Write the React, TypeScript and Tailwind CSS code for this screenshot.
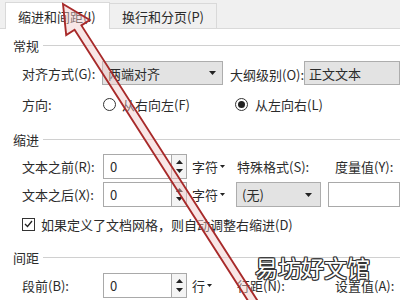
import React from "react";

function Tri({ down = true, w = 7, h = 4 }: { down?: boolean; w?: number; h?: number }) {
  return (
    <svg width={w} height={h} viewBox={`0 0 ${w} ${h}`} className="shrink-0">
      {down ? (
        <polygon points={`0,0 ${w},0 ${w / 2},${h}`} fill="#222" />
      ) : (
        <polygon points={`0,${h} ${w},${h} ${w / 2},0`} fill="#222" />
      )}
    </svg>
  );
}

function Header({ text }: { text: string }) {
  return (
    <div className="flex items-center h-[24px] pl-[13px]">
      <span className="text-[13px] leading-none text-[#2b2b2b]">{text}</span>
      <div className="flex-1 h-px bg-[#d0d0d0] ml-[4px]" />
    </div>
  );
}

function Label({ text, w = "w-[81px]" }: { text: string; w?: string }) {
  return <span className={`${w} shrink-0 text-[13px] leading-none text-[#2b2b2b] whitespace-nowrap`}>{text}</span>;
}

function Spin() {
  return (
    <div className="flex items-center">
      <div className="w-[69px] h-[25px] bg-white border border-[#a9a9a9] flex items-center pl-[6px] text-[13px] leading-none text-[#2b2b2b]">
        0
      </div>
      <div className="w-[15px] h-[25px] border border-l-0 border-[#a9a9a9] bg-[#f4f4f4] flex flex-col items-center justify-center gap-[5px]">
        <Tri down={false} w={7} h={4} />
        <Tri down={true} w={7} h={4} />
      </div>
    </div>
  );
}

function Unit({ text }: { text: string }) {
  return (
    <span className="flex items-center gap-[2px] ml-[5px] w-[45px] shrink-0 text-[13px] leading-none text-[#2b2b2b]">
      {text}
      <Tri w={5} h={3} />
    </span>
  );
}

export default function App() {
  return (
    <div className="relative w-[400px] h-[300px] overflow-hidden bg-white font-['Noto_Sans_CJK_SC','Microsoft_YaHei',sans-serif]">
      {/* Tabs */}
      <div className="flex items-end h-[29px] bg-[#f0f0f0] border-b border-[#d9d9d9] pl-[5px]">
        <div className="w-[105px] h-[27px] bg-white border border-b-0 border-[#d9d9d9] -mb-px flex items-center pl-[12px] text-[13px] leading-none text-[#2b2b2b]">
          缩进和间距(I)
        </div>
        <div className="w-[107px] h-[25px] bg-[#f0f0f0] border-t border-r border-[#d9d9d9] flex items-center justify-center text-[13px] leading-none text-[#2b2b2b]">
          换行和分页(P)
        </div>
      </div>

      <div className="mt-[4px]">
        <Header text="常规" />
      </div>

      {/* Row 1 */}
      <div className="flex items-center h-[24px] mt-[4px] pl-[22px]">
        <Label text="对齐方式(G):" w="w-[80px]" />
        <div className="w-[126px] h-[24px] bg-[#e3e3e3] border border-[#adadad] flex items-center justify-between pl-[5px] pr-[6px] text-[13px] leading-none text-[#2b2b2b]">
          两端对齐
          <Tri />
        </div>
        <div className="ml-[7px]">
          <Label text="大纲级别(O):" w="w-[77px]" />
        </div>
        <div className="w-[100px] h-[24px] bg-[#e3e3e3] border border-[#adadad] flex items-center pl-[4px] text-[13px] leading-none text-[#2b2b2b]">
          正文文本
        </div>
      </div>

      {/* Row 2 */}
      <div className="flex items-center h-[24px] mt-[7px] pl-[22px]">
        <Label text="方向:" />
        <div className="flex items-center w-[132px]">
          <span className="w-[13px] h-[13px] rounded-full border border-[#333] bg-white shrink-0" />
          <span className="ml-[6px] text-[13px] leading-none text-[#2b2b2b]">从右向左(F)</span>
        </div>
        <div className="flex items-center">
          <span className="w-[13px] h-[13px] rounded-full border border-[#333] bg-white shrink-0 flex items-center justify-center">
            <span className="w-[7px] h-[7px] rounded-full bg-[#222]" />
          </span>
          <span className="ml-[7px] text-[13px] leading-none text-[#2b2b2b]">从左向右(L)</span>
        </div>
      </div>

      <div className="mt-[11px]">
        <Header text="缩进" />
      </div>

      {/* Row 3 */}
      <div className="flex items-center h-[25px] mt-[3px] pl-[22px]">
        <Label text="文本之前(R):" />
        <Spin />
        <Unit text="字符" />
        <Label text="特殊格式(S):" w="w-[98px]" />
        <Label text="度量值(Y):" w="w-[70px]" />
      </div>

      {/* Row 4 */}
      <div className="flex items-center h-[25px] mt-[3px] pl-[22px]">
        <Label text="文本之后(X):" />
        <Spin />
        <Unit text="字符" />
        <div className="w-[92px] h-[25px] bg-[#e3e3e3] border border-[#adadad] flex items-center justify-between pl-[5px] pr-[8px] text-[13px] leading-none text-[#2b2b2b] -ml-[1px]">
          (无)
          <Tri />
        </div>
        <div className="ml-[7px] w-[80px] h-[25px] bg-white border border-[#a9a9a9]" />
      </div>

      {/* Checkbox */}
      <div className="flex items-center h-[24px] mt-[5px] pl-[22px]">
        <span className="w-[13px] h-[13px] border border-[#333] bg-white flex items-center justify-center shrink-0">
          <svg width="9" height="8" viewBox="0 0 9 8">
            <polyline points="1,4 3.5,6.5 8,1" fill="none" stroke="#222" strokeWidth="1.3" />
          </svg>
        </span>
        <span className="ml-[6px] text-[13px] leading-none text-[#2b2b2b] whitespace-nowrap">
          如果定义了文档网格，则自动调整右缩进(D)
        </span>
      </div>

      <div className="mt-[9px]">
        <Header text="间距" />
      </div>

      {/* Row 5 */}
      <div className="flex items-center h-[25px] mt-[4px] pl-[22px]">
        <Label text="段前(B):" />
        <Spin />
        <Unit text="行" />
        <Label text="行距(N):" w="w-[98px]" />
        <Label text="设置值(A):" w="w-[70px]" />
      </div>

      {/* Red arrow annotation */}
      <svg className="absolute left-0 top-0 pointer-events-none" width="400" height="300" viewBox="0 0 400 300">
        <polygon
          points="63,4 89.8,20 81.4,25.4 263.5,310 253.9,310 74.6,29.8 66.2,35.1"
          fill="rgba(240,200,200,0.45)"
          stroke="#a82a2a"
          strokeWidth="1.9"
          strokeLinejoin="miter"
        />
      </svg>

      {/* Watermark */}
      <div className="absolute left-[255px] top-[256px] text-[23px] leading-none text-white font-['Noto_Sans_CJK_SC',sans-serif] [text-shadow:1px_1px_0_#333,-1px_-1px_0_#333,1px_-1px_0_#333,-1px_1px_0_#333,0_1px_0_#333,0_-1px_0_#333,1px_0_0_#333,-1px_0_0_#333]">
        易坊好文馆
      </div>
    </div>
  );
}
